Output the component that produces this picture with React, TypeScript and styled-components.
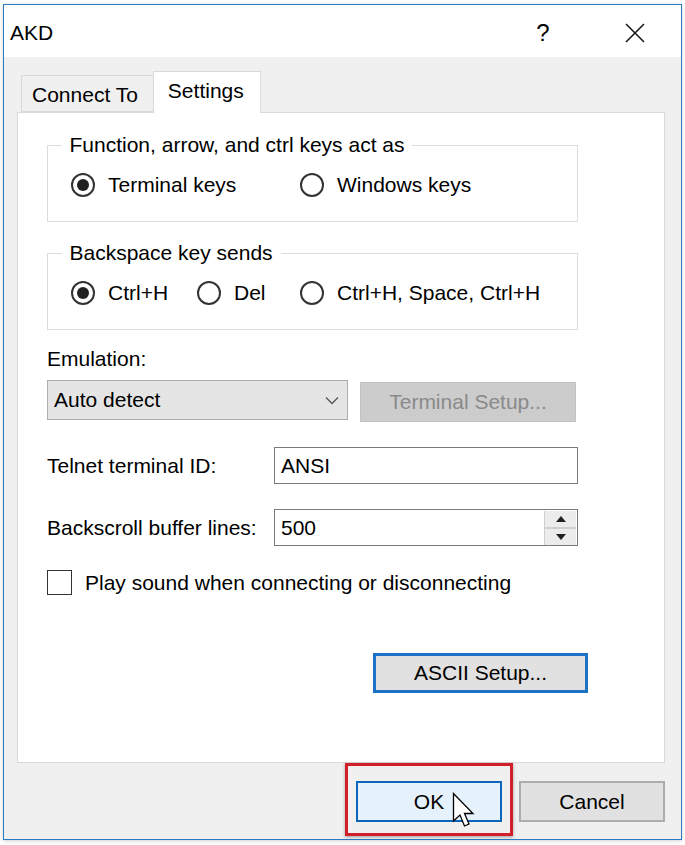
import React from "react";
import styled, { createGlobalStyle } from "styled-components";

const GlobalStyle = createGlobalStyle`
  html, body { margin: 0; padding: 0; background: #ffffff; }
  body { font-family: "Liberation Sans", Arial, sans-serif; color: #000; }
  * { box-sizing: border-box; }
`;

const Page = styled.div`
  width: 685px;
  height: 845px;
  padding: 4px 0 0 3px;
`;

const Window = styled.div`
  width: 679px;
  height: 836px;
  border: 1px solid #2b7ac2;
  background: #f0f0f0;
  display: flex;
  flex-direction: column;
  box-shadow: 0 1px 4px rgba(0, 0, 0, 0.18);
`;

const TitleBar = styled.div`
  height: 52px;
  background: #ffffff;
  display: flex;
  align-items: center;
  padding-left: 6px;
  padding-top: 3px;
  font-size: 21px;
`;

const Title = styled.div`
  flex: 1;
`;

const TitleButton = styled.div`
  width: 92px;
  height: 49px;
  display: flex;
  align-items: center;
  justify-content: center;
  font-size: 24px;
`;

const Body = styled.div`
  flex: 1;
  display: flex;
  flex-direction: column;
  padding: 14px 16px 0 13px;
`;

const TabRow = styled.div`
  display: flex;
  align-items: flex-end;
  height: 41px;
  padding-left: 4px;
  position: relative;
  z-index: 1;
`;

const Tab = styled.div<{ $active?: boolean }>`
  height: ${(p) => (p.$active ? "42px" : "37px")};
  margin-bottom: ${(p) => (p.$active ? "-1px" : "0")};
  padding: 0 ${(p) => (p.$active ? "16px" : "15px")} 0 ${(p) => (p.$active ? "14px" : "10px")};
  display: flex;
  align-items: ${(p) => (p.$active ? "flex-start" : "center")};
  padding-top: ${(p) => (p.$active ? "7px" : "3px")};
  font-size: 21px;
  background: ${(p) => (p.$active ? "#ffffff" : "#f0f0f0")};
  border: 1px solid #d9d9d9;
  border-bottom: ${(p) => (p.$active ? "none" : "1px solid #d9d9d9")};
  ${(p) => (p.$active ? "" : "border-right: none;")}
  color: #000;
`;

const Panel = styled.div`
  height: 651px;
  background: #ffffff;
  border: 1px solid #d9d9d9;
  padding: 20px 0 0 29px;
  display: flex;
  flex-direction: column;
`;

const Group = styled.fieldset`
  width: 531px;
  margin: 0;
  padding: 16px 0 0 23px;
  border: 1.5px solid #dcdcdc;
  height: 89px;
  display: flex;
`;

const Legend = styled.legend`
  font-size: 21px;
  padding: 0 8px;
  margin-left: -9.5px;
  line-height: 24px;
`;

const RadioRow = styled.div`
  display: flex;
  align-items: center;
`;

const RadioItem = styled.label<{ $w: number }>`
  display: flex;
  align-items: center;
  width: ${(p) => p.$w}px;
  font-size: 21px;
  white-space: nowrap;
`;

const RadioCircle = styled.span<{ $on?: boolean }>`
  width: 24px;
  height: 24px;
  border-radius: 50%;
  border: 2px solid #333333;
  display: inline-flex;
  align-items: center;
  justify-content: center;
  margin-right: 13px;
  flex: none;
  &::after {
    content: "";
    width: 12px;
    height: 12px;
    border-radius: 50%;
    background: ${(p) => (p.$on ? "#222222" : "transparent")};
  }
`;

const Spacer = styled.div<{ $h: number }>`
  height: ${(p) => p.$h}px;
  flex: none;
`;

const Label = styled.div`
  font-size: 21px;
  line-height: 24px;
`;

const Row = styled.div<{ $top?: boolean }>`
  display: flex;
  align-items: ${(p) => (p.$top ? "flex-start" : "center")};
  width: 531px;
`;

const Select = styled.div`
  width: 301px;
  height: 40px;
  background: #e5e5e5;
  border: 1.5px solid #adadad;
  display: flex;
  align-items: center;
  justify-content: space-between;
  padding: 0 8px 0 6px;
  font-size: 21px;
`;

const DisabledButton = styled.div`
  margin-left: 12px;
  width: 216px;
  height: 40px;
  margin-top: 2px;
  background: #cccccc;
  border: 1px solid #c3c3c3;
  color: #8a8a8a;
  font-size: 21px;
  display: flex;
  align-items: center;
  justify-content: center;
`;

const FieldLabel = styled.div`
  width: 227px;
  font-size: 21px;
`;

const TextBox = styled.div`
  width: 304px;
  height: 37px;
  border: 1.5px solid #7a7a7a;
  background: #fff;
  display: flex;
  align-items: center;
  justify-content: space-between;
  padding-left: 6px;
  font-size: 21px;
`;

const Spinner = styled.div`
  width: 32px;
  height: 34px;
  margin-right: 1px;
  display: flex;
  flex-direction: column;
  border-left: 1px solid #d0d0d0;
`;

const SpinHalf = styled.div`
  flex: 1;
  background: #ececec;
  display: flex;
  align-items: center;
  justify-content: center;
  & + & {
    border-top: 2px solid #cfcfcf;
  }
`;

const CheckRow = styled.label`
  display: flex;
  align-items: center;
  font-size: 21px;
`;

const CheckBox = styled.span`
  width: 25px;
  height: 25px;
  border: 1.5px solid #333333;
  margin-right: 13px;
  flex: none;
`;

const AsciiRow = styled.div`
  display: flex;
  padding-left: 326px;
`;

const AsciiButton = styled.div`
  width: 215px;
  height: 40px;
  background: #e1e1e1;
  border: 3px solid #1c72c4;
  font-size: 21px;
  display: flex;
  align-items: center;
  justify-content: center;
`;

const Footer = styled.div`
  display: flex;
  justify-content: flex-end;
  gap: 17px;
  padding-top: 18px;
`;

const OkWrap = styled.div`
  position: relative;
  &::before {
    content: "";
    position: absolute;
    left: -11px;
    right: -11px;
    top: -18px;
    bottom: -14px;
    border: 3px solid #d2202a;
    box-shadow: 0 1px 3px rgba(0, 0, 0, 0.35);
    pointer-events: none;
  }
`;

const DialogButton = styled.div<{ $default?: boolean }>`
  width: 146px;
  height: 41px;
  font-size: 21px;
  display: flex;
  align-items: center;
  justify-content: center;
  background: ${(p) => (p.$default ? "#e5f1fb" : "#e1e1e1")};
  border: ${(p) => (p.$default ? "2px solid #0a66b8" : "2px solid #adadad")};
`;

const Cursor = styled.svg`
  position: absolute;
  left: 96px;
  top: 11px;
`;

const Chevron = () => (
  <svg width="14" height="9" viewBox="0 0 14 9">
    <path d="M1 1.5 L7 7.5 L13 1.5" fill="none" stroke="#555" strokeWidth="1.3" />
  </svg>
);

const CloseIcon = () => (
  <svg width="20" height="20" viewBox="0 0 20 20">
    <path d="M1 1 L19 19 M19 1 L1 19" stroke="#111" strokeWidth="1.5" />
  </svg>
);

export default function App() {
  return (
    <>
      <GlobalStyle />
      <Page>
        <Window>
          <TitleBar>
            <Title>AKD</Title>
            <TitleButton>?</TitleButton>
            <TitleButton>
              <CloseIcon />
            </TitleButton>
          </TitleBar>
          <Body>
            <TabRow>
              <Tab>Connect To</Tab>
              <Tab $active>Settings</Tab>
            </TabRow>
            <Panel>
              <Group>
                <Legend>Function, arrow, and ctrl keys act as</Legend>
                <RadioRow>
                  <RadioItem $w={229}>
                    <RadioCircle $on />
                    Terminal keys
                  </RadioItem>
                  <RadioItem $w={250}>
                    <RadioCircle />
                    Windows keys
                  </RadioItem>
                </RadioRow>
              </Group>
              <Spacer $h={19} />
              <Group>
                <Legend>Backspace key sends</Legend>
                <RadioRow>
                  <RadioItem $w={126}>
                    <RadioCircle $on />
                    Ctrl+H
                  </RadioItem>
                  <RadioItem $w={103}>
                    <RadioCircle />
                    Del
                  </RadioItem>
                  <RadioItem $w={260}>
                    <RadioCircle />
                    Ctrl+H, Space, Ctrl+H
                  </RadioItem>
                </RadioRow>
              </Group>
              <Spacer $h={17} />
              <Label>Emulation:</Label>
              <Spacer $h={9} />
              <Row $top>
                <Select>
                  Auto detect
                  <Chevron />
                </Select>
                <DisabledButton>Terminal Setup...</DisabledButton>
              </Row>
              <Spacer $h={25} />
              <Row>
                <FieldLabel>Telnet terminal ID:</FieldLabel>
                <TextBox>ANSI</TextBox>
              </Row>
              <Spacer $h={25} />
              <Row>
                <FieldLabel>Backscroll buffer lines:</FieldLabel>
                <TextBox>
                  500
                  <Spinner>
                    <SpinHalf>
                      <svg width="10" height="6" viewBox="0 0 10 6">
                        <path d="M5 0 L10 6 L0 6 Z" fill="#222" />
                      </svg>
                    </SpinHalf>
                    <SpinHalf>
                      <svg width="10" height="6" viewBox="0 0 10 6">
                        <path d="M0 0 L10 0 L5 6 Z" fill="#222" />
                      </svg>
                    </SpinHalf>
                  </Spinner>
                </TextBox>
              </Row>
              <Spacer $h={24} />
              <CheckRow>
                <CheckBox />
                Play sound when connecting or disconnecting
              </CheckRow>
              <Spacer $h={58} />
              <AsciiRow>
                <AsciiButton>ASCII Setup...</AsciiButton>
              </AsciiRow>
            </Panel>
            <Footer>
              <OkWrap>
                <DialogButton $default>OK</DialogButton>
                <Cursor width="26" height="38" viewBox="0 0 26 38">
                  <path
                    d="M1.5 1.5 L1.5 29 L8 23 L12.5 34 L17 32 L12.5 21.5 L21 21.5 Z"
                    fill="#ffffff"
                    stroke="#000000"
                    strokeWidth="1.3"
                    strokeLinejoin="miter"
                  />
                </Cursor>
              </OkWrap>
              <DialogButton>Cancel</DialogButton>
            </Footer>
          </Body>
        </Window>
      </Page>
    </>
  );
}
